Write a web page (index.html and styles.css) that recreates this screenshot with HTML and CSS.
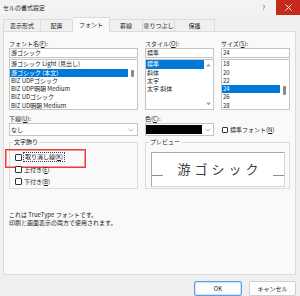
FILE: index.html
```html
<!DOCTYPE html>
<html lang="ja">
<head>
<meta charset="utf-8">
<title>セルの書式設定</title>
<link rel="stylesheet" href="styles.css">
</head>
<body>
<div class="window">
  <div class="titlebar">
    <span class="title">セルの書式設定</span>
    <span class="help">?</span>
    <span class="close">
      <svg width="7" height="7" viewBox="0 0 7 7"><path d="M0.5 0.5 L6.5 6.5 M6.5 0.5 L0.5 6.5" stroke="#fff" stroke-width="0.9" fill="none"/></svg>
    </span>
  </div>
  <div class="tabs">
    <div class="tab">表示形式</div>
    <div class="tab">配置</div>
    <div class="tab active">フォント</div>
    <div class="tab">罫線</div>
    <div class="tab">塗りつぶし</div>
    <div class="tab">保護</div>
  </div>
  <div class="panel">
    <div class="grid">
      <div class="col">
        <div class="label">フォント名(<u>F</u>):</div>
        <div class="input">游ゴシック</div>
        <div class="list">
          <div class="items">
            <div class="item">游ゴシック Light (見出し)</div>
            <div class="item sel">游ゴシック (本文)</div>
            <div class="item">BIZ UDPゴシック</div>
            <div class="item">BIZ UDP明朝 Medium</div>
            <div class="item">BIZ UDゴシック</div>
            <div class="item">BIZ UD明朝 Medium</div>
          </div>
          <div class="scroll"><div class="thumb thumb-font"></div></div>
        </div>
      </div>
      <div class="col">
        <div class="label">スタイル(<u>O</u>):</div>
        <div class="input">標準</div>
        <div class="list">
          <div class="items">
            <div class="item sel">標準</div>
            <div class="item">斜体</div>
            <div class="item">太字</div>
            <div class="item">太字 斜体</div>
          </div>
          <div class="scroll arrows">
            <svg width="5" height="4" viewBox="0 0 5 4"><path d="M0 3.5 L2.5 0.5 L5 3.5 Z" fill="#a8a8a8"/></svg>
            <svg width="5" height="4" viewBox="0 0 5 4"><path d="M0 0.5 L2.5 3.5 L5 0.5 Z" fill="#a8a8a8"/></svg>
          </div>
        </div>
      </div>
      <div class="col">
        <div class="label">サイズ(<u>S</u>):</div>
        <div class="input">24</div>
        <div class="list">
          <div class="items">
            <div class="item">18</div>
            <div class="item">20</div>
            <div class="item">22</div>
            <div class="item sel">24</div>
            <div class="item">26</div>
            <div class="item">28</div>
          </div>
          <div class="scroll"><div class="thumb thumb-size"></div></div>
        </div>
      </div>

      <div class="col row2">
        <div class="label">下線(<u>U</u>):</div>
        <div class="dropdown">
          <span class="dd-text">なし</span>
          <svg class="chev" width="6" height="4" viewBox="0 0 6 4"><path d="M0.5 0.8 L3 3.2 L5.5 0.8" stroke="#8a8a8a" stroke-width="0.7" fill="none"/></svg>
        </div>
      </div>
      <div class="col row2">
        <div class="label">色(<u>C</u>):</div>
        <div class="dropdown color">
          <span class="swatch"></span>
          <svg class="chev" width="6" height="4" viewBox="0 0 6 4"><path d="M0.5 0.8 L3 3.2 L5.5 0.8" stroke="#8a8a8a" stroke-width="0.7" fill="none"/></svg>
        </div>
      </div>
      <div class="col row2">
        <div class="label"></div>
        <div class="check-row std">
          <span class="box small"></span>
          <span class="check-label">標準フォント(<u>N</u>)</span>
        </div>
      </div>

      <fieldset class="group deco">
        <legend>文字飾り</legend>
        <div class="opt first">
          <span class="box"></span>
          <span class="check-label focus">取り消し線(<u>K</u>)</span>
          <span class="highlight"></span>
        </div>
        <div class="opt">
          <span class="box"></span>
          <span class="check-label">上付き(<u>E</u>)</span>
        </div>
        <div class="opt">
          <span class="box"></span>
          <span class="check-label">下付き(<u>B</u>)</span>
        </div>
      </fieldset>

      <fieldset class="group preview">
        <legend>プレビュー</legend>
        <div class="preview-box">
          <span class="pline"></span>
          <span class="ptext">游ゴシック</span>
          <span class="pline"></span>
        </div>
      </fieldset>
    </div>
    <div class="desc">
      <div>これは TrueType フォントです。</div>
      <div>印刷と画面表示の両方で使用されます。</div>
    </div>
  </div>
  <div class="footer">
    <div class="btn ok">OK</div>
    <div class="btn">キャンセル</div>
  </div>
</div>
</body>
</html>
```
FILE: styles.css
```css
* { box-sizing: border-box; }
html, body { margin: 0; padding: 0; }
body {
  background: #f0f0f0;
  font-family: "Noto Sans CJK JP", "Noto Sans", sans-serif;
  font-size: 6px;
  color: #1b1b1b;
}
u { text-decoration: underline; text-underline-offset: 1px; }
.window {
  width: 300px;
  height: 296px;
  overflow: hidden;
  background: #f0f0f0;
}
.titlebar {
  display: flex;
  align-items: center;
  height: 15px;
  background: #f3f3f3;
}
.title { padding-left: 3px; font-size: 6px; color: #222; }
.help { margin-left: auto; margin-right: 11px; font-size: 6px; color: #444; }
.close {
  width: 24px;
  height: 15px;
  background: #c42b1c;
  display: flex;
  align-items: center;
  justify-content: center;
}
.tabs {
  display: flex;
  align-items: flex-end;
  height: 17px;
  padding-left: 3px;
  margin-bottom: -1px;
  position: relative;
  z-index: 1;
}
.tab {
  height: 13px;
  line-height: 12px;
  text-align: center;
  border: 1px solid #dcdcdc;
  border-left: none;
  background: #f0f0f0;
  color: #222;
}
.tab:first-child { border-left: 1px solid #dcdcdc; }
.tab:nth-child(1) { width: 38px; }
.tab:nth-child(2) { width: 32px; }
.tab:nth-child(3) { width: 37px; }
.tab:nth-child(4) { width: 33px; }
.tab:nth-child(5) { width: 32px; }
.tab:nth-child(6) { width: 40px; }
.tab.active {
  height: 15px;
  line-height: 14px;
  background: #f9f9f9;
  border-bottom-color: #f9f9f9;
}
.panel {
  margin: 0 4px 0 3px;
  height: 244px;
  border: 1px solid #dcdcdc;
  background: #f9f9f9;
  padding: 7px 5px 0 5px;
}
.grid {
  display: grid;
  grid-template-columns: 129px 69px 69px;
  column-gap: 7px;
}
.label {
  height: 9px;
  line-height: 9px;
  white-space: nowrap;
}
.input {
  height: 10px;
  line-height: 8px;
  border: 1px solid #c4c4c4;
  background: #fff;
  padding-left: 1px;
  white-space: nowrap;
}
.list {
  margin-top: 1px;
  height: 51px;
  border: 1px solid #c4c4c4;
  background: #fff;
  display: flex;
  overflow: hidden;
}
.items { flex: 1; min-width: 0; padding-top: 0.3px; }
.item {
  height: 8.3px;
  line-height: 8.3px;
  padding-left: 1px;
  white-space: nowrap;
}
.item.sel { background: #0078d7; color: #fff; }
.scroll {
  width: 9px;
  flex: none;
  position: relative;
}
.thumb {
  width: 3px;
  margin-left: 3px;
  background: #8a8a8a;
  border-radius: 1px;
}
.thumb-font { margin-top: 10px; height: 7px; }
.thumb-size { margin-top: 26px; height: 9px; }
.arrows {
  display: flex;
  flex-direction: column;
  justify-content: space-between;
  align-items: center;
  padding: 3px 0 3px 0;
}
.row2 { margin-top: 4px; }
.dropdown {
  height: 13px;
  border: 1px solid #c4c4c4;
  background: #fff;
  display: flex;
  align-items: center;
  padding: 0 3px 0 1px;
}
.dd-text { flex: 1; }
.dropdown.color { padding: 1px 2px 1px 0; align-items: stretch; }
.swatch { flex: 1; background: #000; margin-right: 3px; }
.dropdown.color .chev { align-self: center; }
.check-row {
  height: 13px;
  display: flex;
  align-items: center;
}
.box {
  width: 7px;
  height: 7px;
  border: 1px solid #333;
  border-radius: 1px;
  background: #fff;
  flex: none;
}
.box.small { width: 6px; height: 6px; margin-left: 1px; }
.check-label { margin-left: 2px; white-space: nowrap; }
.std .check-label { margin-left: 2px; }
.group {
  margin: 2px 0 0 0;
  padding: 0 4px 1px 5px;
  border: 1px solid #dcdcdc;
  min-width: 0;
}
.group legend {
  padding: 0 1px;
  margin-left: -2px;
  line-height: 8px;
  height: 8px;
}
.deco { padding-top: 5px; }
.opt {
  height: 12px;
  display: flex;
  align-items: center;
  position: relative;
}
.focus {
  border: 1px dotted #444;
  padding: 0 1px;
  line-height: 8px;
  margin-left: 1px;
}
.highlight {
  position: absolute;
  left: -10px;
  top: -2px;
  width: 81px;
  height: 19px;
  border: 1px solid #f03a3a;
  box-shadow: inset 0 0 0 1px rgba(240, 70, 70, 0.55);
}
.preview { grid-column: 2 / span 2; padding-top: 6px; padding-bottom: 1px; }
.preview-box {
  height: 35px;
  background: #fff;
  border: 1px solid #a9a9a9;
  border-right-color: #d4d4d4;
  border-bottom-color: #d4d4d4;
  display: flex;
  align-items: center;
}
.pline {
  width: 11px;
  height: 1px;
  background: #8e8e8e;
  margin-top: 12px;
  flex: none;
}
.ptext {
  flex: 1;
  text-align: center;
  font-size: 13px;
  line-height: 13px;
  letter-spacing: 4px;
  padding-left: 4px;
  padding-bottom: 3px;
  color: #3a3a3a;
  font-weight: 400;
}
.desc {
  margin-top: 22px;
  line-height: 8px;
}
.footer {
  display: flex;
  justify-content: flex-end;
  gap: 7px;
  padding: 6px 4px 0 0;
}
.btn {
  height: 15px;
  line-height: 13px;
  text-align: center;
  border: 1px solid #d0d0d0;
  background: #fdfdfd;
  border-radius: 2px;
  width: 47px;
}
.btn.ok {
  width: 48px;
  border: 1px solid #5a9fe0;
  box-shadow: inset 0 0 0 0.5px #9cc6ee;
}
```
